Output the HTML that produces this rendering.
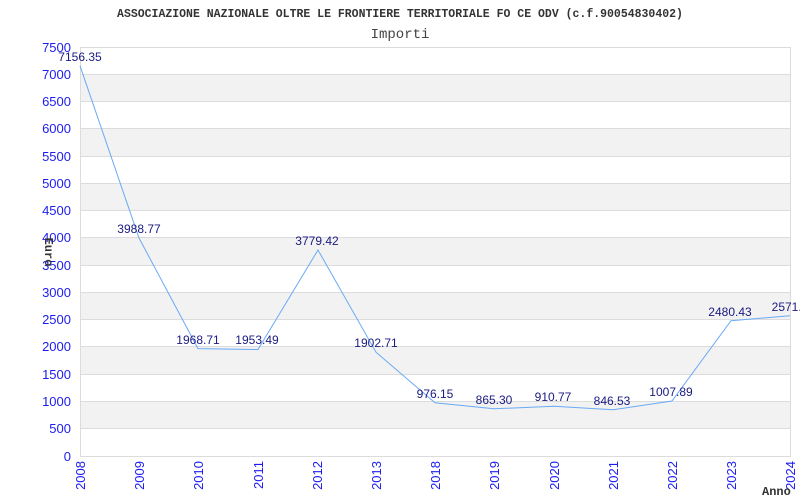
<!DOCTYPE html>
<html><head><meta charset="utf-8"><style>
html,body{margin:0;padding:0;background:#fff;width:800px;height:500px;overflow:hidden}
svg{display:block}
.yl{font:13px "Liberation Sans",sans-serif;fill:#1c1cf0;text-anchor:end}
.xl{font:13px "Liberation Sans",sans-serif;fill:#1c1cf0;text-anchor:end}
.dl{font:12px "Liberation Sans",sans-serif;fill:#1a1a80;text-anchor:middle}
</style></head><body>
<svg width="800" height="500" viewBox="0 0 800 500">
<text x="400" y="17" text-anchor="middle" style="font:bold 11.5px 'Liberation Mono',monospace;fill:#333">ASSOCIAZIONE NAZIONALE OLTRE LE FRONTIERE TERRITORIALE FO CE ODV (c.f.90054830402)</text>
<text x="400" y="38" text-anchor="middle" style="font:14px 'Liberation Mono',monospace;fill:#444">Importi</text>
<g fill="#f2f2f2">
<rect x="80" y="401.5" width="710" height="27.2"/>
<rect x="80" y="346.9" width="710" height="27.3"/>
<rect x="80" y="292.4" width="710" height="27.3"/>
<rect x="80" y="237.9" width="710" height="27.2"/>
<rect x="80" y="183.3" width="710" height="27.3"/>
<rect x="80" y="128.8" width="710" height="27.3"/>
<rect x="80" y="74.3" width="710" height="27.2"/>
</g>
<g stroke="#dcdcdc" stroke-width="1">
<line x1="80" x2="790" y1="47.5" y2="47.5"/><line x1="80" x2="790" y1="74.5" y2="74.5"/>
<line x1="80" x2="790" y1="101.5" y2="101.5"/><line x1="80" x2="790" y1="128.5" y2="128.5"/>
<line x1="80" x2="790" y1="156.5" y2="156.5"/><line x1="80" x2="790" y1="183.5" y2="183.5"/>
<line x1="80" x2="790" y1="210.5" y2="210.5"/><line x1="80" x2="790" y1="237.5" y2="237.5"/>
<line x1="80" x2="790" y1="265.5" y2="265.5"/><line x1="80" x2="790" y1="292.5" y2="292.5"/>
<line x1="80" x2="790" y1="319.5" y2="319.5"/><line x1="80" x2="790" y1="346.5" y2="346.5"/>
<line x1="80" x2="790" y1="374.5" y2="374.5"/><line x1="80" x2="790" y1="401.5" y2="401.5"/>
<line x1="80" x2="790" y1="428.5" y2="428.5"/><line x1="80" x2="790" y1="456.5" y2="456.5"/>
<line x1="80.5" x2="80.5" y1="47" y2="457"/><line x1="790.5" x2="790.5" y1="47" y2="457"/>
</g>
<g class="yl">
<text x="71" y="52">7500</text><text x="71" y="79">7000</text><text x="71" y="106">6500</text>
<text x="71" y="133">6000</text><text x="71" y="161">5500</text><text x="71" y="188">5000</text>
<text x="71" y="215">4500</text><text x="71" y="242">4000</text><text x="71" y="270">3500</text>
<text x="71" y="297">3000</text><text x="71" y="324">2500</text><text x="71" y="351">2000</text>
<text x="71" y="379">1500</text><text x="71" y="406">1000</text><text x="71" y="433">500</text>
<text x="71" y="461">0</text>
</g>
<text transform="translate(45,252) rotate(90)" text-anchor="middle" style="font:bold 12px 'Liberation Mono',monospace;fill:#333">Euro</text>
<text x="762" y="495" style="font:bold 12px 'Liberation Mono',monospace;fill:#333">Anno</text>
<g class="xl">
<text transform="translate(85,461) rotate(-90)">2008</text>
<text transform="translate(144,461) rotate(-90)">2009</text>
<text transform="translate(203,461) rotate(-90)">2010</text>
<text transform="translate(263,461) rotate(-90)">2011</text>
<text transform="translate(322,461) rotate(-90)">2012</text>
<text transform="translate(381,461) rotate(-90)">2013</text>
<text transform="translate(440,461) rotate(-90)">2018</text>
<text transform="translate(499,461) rotate(-90)">2019</text>
<text transform="translate(559,461) rotate(-90)">2020</text>
<text transform="translate(618,461) rotate(-90)">2021</text>
<text transform="translate(677,461) rotate(-90)">2022</text>
<text transform="translate(736,461) rotate(-90)">2023</text>
<text transform="translate(795,461) rotate(-90)">2024</text>
</g>
<polyline fill="none" stroke="#6aaaf5" stroke-width="1" points="80,65.8 139,238 198,348.6 258,349.5 318,250 376,352.2 435,402.8 494,408.8 554,406.3 613,409.8 672,401 731,320.7 790,315.8"/>
<g class="dl">
<text x="80" y="61">7156.35</text>
<text x="139" y="233">3988.77</text>
<text x="198" y="344">1968.71</text>
<text x="257" y="344">1953.49</text>
<text x="317" y="245">3779.42</text>
<text x="376" y="347">1902.71</text>
<text x="435" y="398">976.15</text>
<text x="494" y="404">865.30</text>
<text x="553" y="401">910.77</text>
<text x="612" y="405">846.53</text>
<text x="671" y="396">1007.89</text>
<text x="730" y="316">2480.43</text>
<text x="790" y="311">2571.6</text>
</g>
</svg>
</body></html>
